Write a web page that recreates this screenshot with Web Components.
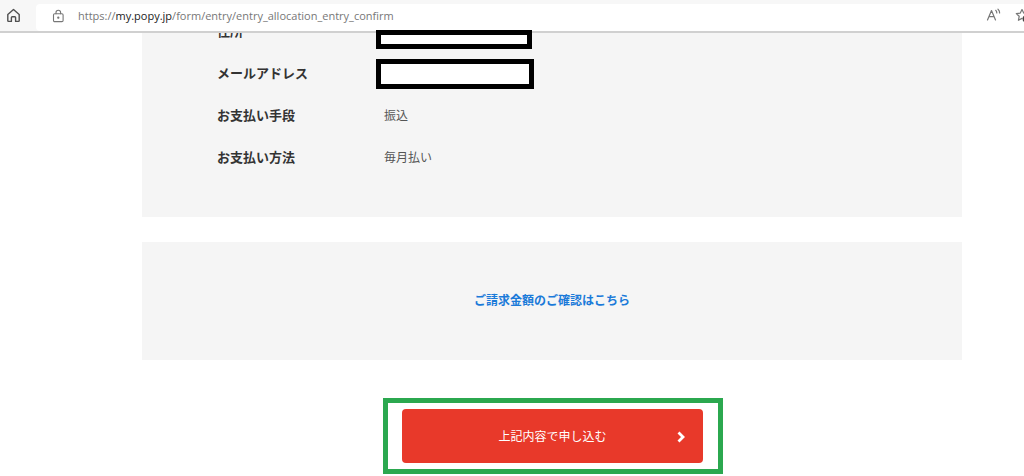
<!DOCTYPE html>
<html lang="ja">
<head>
<meta charset="utf-8">
<title>お申し込み内容の確認</title>
<style>
body { margin: 0; background: #fff; color: #333; font-family: "Liberation Sans", "Noto Sans CJK JP", sans-serif; overflow: hidden; }
</style>
</head>
<body>
<browser-bar>
  <span slot="before">https://</span><b slot="host">my.popy.jp</b><span slot="after">/form/entry/entry_allocation_entry_confirm</span>
</browser-bar>
<entry-page>
  <entry-panel>
    <entry-row label="住所"><redacted-value class="short"></redacted-value></entry-row>
    <entry-row label="メールアドレス"><redacted-value></redacted-value></entry-row>
    <entry-row label="お支払い手段">振込</entry-row>
    <entry-row label="お支払い方法">毎月払い</entry-row>
  </entry-panel>
  <billing-link href="#billing">ご請求金額のご確認はこちら</billing-link>
  <submit-button>上記内容で申し込む</submit-button>
</entry-page>
<script>
const define = (name, html, setup) => customElements.define(name, class extends HTMLElement {
  connectedCallback() {
    if (this.shadowRoot) return;
    this.attachShadow({ mode: 'open' }).innerHTML = html;
    if (setup) setup(this, this.shadowRoot);
  }
});

define('browser-bar', `
<style>
:host { position: absolute; inset: 0 0 auto 0; z-index: 1; display: block; overflow: hidden; background: #f7f7f7; border-bottom: 2px solid #d0d0d0; }
header { display: flex; align-items: center; height: 31px; }
button { border: 0; padding: 0; background: none; display: flex; flex: none; color: #505050; }
.home { margin: 0 15px 0 6px; }
.field { flex: 1; min-width: 0; display: flex; align-items: center; box-sizing: border-box; height: 27px; margin-top: 4px; padding: 0 0 4px 16px; background: #fff; border-radius: 4px 0 0 4px; }
.field button { color: #777; }
.url { flex: 1; margin-left: 13px; white-space: nowrap; font: 11px/16px "Open Sans", sans-serif; color: #777; }
::slotted(b) { font-weight: 400; color: #222; }
.tools { display: flex; gap: 14px; margin-right: -6px; }
svg { fill: none; stroke: currentColor; stroke-linejoin: round; stroke-linecap: round; }
</style>
<header>
  <button class="home" aria-label="ホーム"><svg width="15" height="15" viewBox="0 0 15 15" stroke-width="1.4"><path d="M1.8 6.5 7.5 1.4l5.7 5.1v6.2q0 .7-.7.7H9.6V9.6q0-.8-.8-.8H6.2q-.8 0-.8.8v3.8H2.5q-.7 0-.7-.7Z"/></svg></button>
  <div class="field">
    <button aria-label="サイト情報"><svg width="13" height="14" viewBox="0 0 13 14" stroke-width="1.1"><rect x="1.5" y="4.8" width="9.6" height="7.8" rx="1.2"/><path d="M4 4.8V3.5a2.3 2.3 0 0 1 4.6 0v1.3"/><circle cx="6.3" cy="8.7" r=".6" fill="currentColor"/></svg></button>
    <div class="url"><slot name="before"></slot><slot name="host"></slot><slot name="after"></slot></div>
    <div class="tools">
      <button aria-label="音声で読み上げる"><svg width="15" height="14" viewBox="0 0 15 14" stroke-width="1.2"><path d="M1.5 12 5.5 2.5 9.5 12M3 8.7h5M9.7 2.3q1.2 1 1.1 2.7M12 1.2q1.8 1.4 1.6 3.8"/></svg></button>
      <button aria-label="お気に入りに追加"><svg width="15" height="15" viewBox="0 0 15 15" stroke-width="1.2"><path d="m7 1.5 1.7 3.6 4 .5-2.9 2.7M7 1.5 5.3 5.1l-4 .5 2.9 2.7-.8 4L7 10.4"/><circle cx="11" cy="10.8" r="3.5" fill="#444" stroke="none"/></svg></button>
    </div>
  </div>
</header>`);

define('entry-page', `
<style>
:host { display: block; padding: 0 62px 0 142px; }
main { display: flex; flex-direction: column; }
</style>
<main><slot></slot></main>`);

define('entry-panel', `
<style>
:host { display: block; padding: 11px 75px 38px; background: #f5f5f5; }
</style>
<slot></slot>`);

define('entry-row', `
<style>
:host { display: grid; grid-template-columns: 159px 1fr; align-items: center; height: 42px; }
.label { font-size: 13px; line-height: 20px; font-weight: 700; }
.value { font-size: 12px; line-height: 20px; padding-left: 8px; color: #555; }
::slotted(redacted-value) { margin-left: -8px; }
</style>
<div class="label"></div><div class="value"><slot></slot></div>`,
(el, root) => { root.querySelector('.label').textContent = el.getAttribute('label'); });

define('redacted-value', `
<style>
:host { position: relative; z-index: 2; display: block; box-sizing: border-box; width: 158px; height: 30px; border: 5px solid #000; background: #fff; }
:host(.short) { width: 156px; height: 19px; margin-top: 14px; }
</style>`);

define('billing-link', `
<style>
:host { display: block; margin-top: 25px; padding: 49px 16px; text-align: center; background: #f5f5f5; }
a { display: block; font-size: 12px; line-height: 20px; font-weight: 700; color: #1a7ad9; text-decoration: none; }
</style>
<a><slot></slot></a>`,
(el, root) => { root.querySelector('a').href = el.getAttribute('href'); });

define('submit-button', `
<style>
:host { display: block; align-self: center; box-sizing: border-box; width: 340px; margin: 38px 0 0 2px; padding: 6px 15px 6px 14px; border: 5px solid #2ba84f; background: #fff; }
button { display: grid; grid-template-columns: 32px 1fr 32px; align-items: center; width: 100%; height: 54px; margin: 0; padding: 1px 6px 0; border: 0; border-radius: 4px; background: #e8392a; color: #fff; font-family: inherit; font-size: 12px; line-height: 20px; }
span { grid-column: 2; }
svg { justify-self: center; fill: none; stroke: #fff; stroke-width: 2.8; }
</style>
<button type="submit"><span><slot></slot></span><svg width="10" height="12" viewBox="0 0 10 12"><path d="m2.5 1.5 4.5 4.5-4.5 4.5"/></svg></button>`);
</script>
</body>
</html>
